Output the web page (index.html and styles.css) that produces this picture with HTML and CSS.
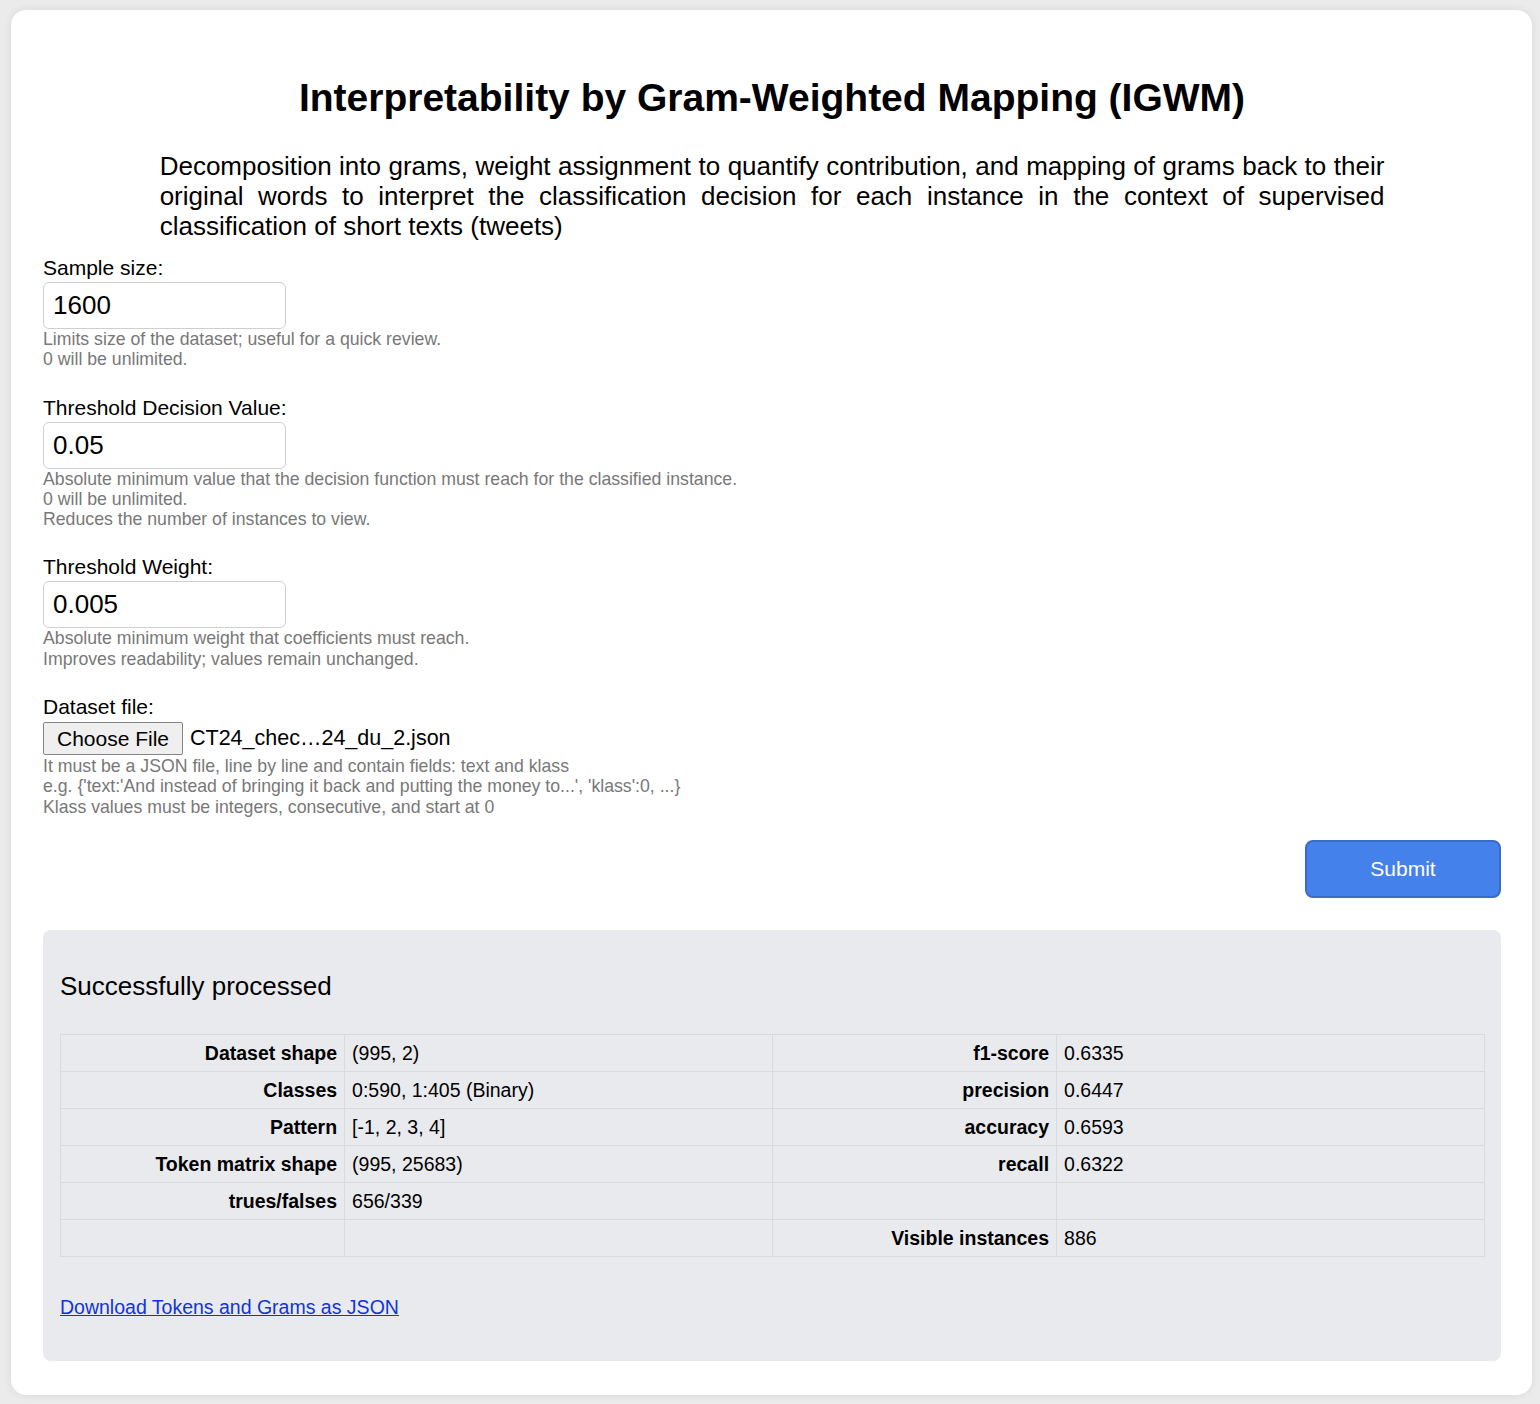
FILE: index.html
```html
<!DOCTYPE html>
<html lang="en">
<head>
<meta charset="utf-8">
<title>IGWM</title>
<link rel="stylesheet" href="styles.css">
</head>
<body>
<div class="card">
  <h1 class="title">Interpretability by Gram-Weighted Mapping (IGWM)</h1>
  <p class="intro">Decomposition into grams, weight assignment to quantify contribution, and mapping of grams back to their original words to interpret the classification decision for each instance in the context of supervised classification of short texts (tweets)</p>

  <form class="form">
    <div class="group">
      <label class="label">Sample size:</label>
      <input class="field" type="text" value="1600">
      <div class="help">Limits size of the dataset; useful for a quick review.<br>0 will be unlimited.</div>
    </div>
    <div class="group">
      <label class="label">Threshold Decision Value:</label>
      <input class="field" type="text" value="0.05">
      <div class="help">Absolute minimum value that the decision function must reach for the classified instance.<br>0 will be unlimited.<br>Reduces the number of instances to view.</div>
    </div>
    <div class="group">
      <label class="label">Threshold Weight:</label>
      <input class="field" type="text" value="0.005">
      <div class="help">Absolute minimum weight that coefficients must reach.<br>Improves readability; values remain unchanged.</div>
    </div>
    <div class="group">
      <label class="label">Dataset file:</label>
      <div class="file-row">
        <button type="button" class="file-btn">Choose File</button>
        <span class="file-name">CT24_chec…24_du_2.json</span>
      </div>
      <div class="help">It must be a JSON file, line by line and contain fields: text and klass<br>e.g. {'text:'And instead of bringing it back and putting the money to...', 'klass':0, ...}<br>Klass values must be integers, consecutive, and start at 0</div>
    </div>
    <div class="actions">
      <button type="button" class="submit">Submit</button>
    </div>
  </form>

  <section class="results">
    <h2 class="results-title">Successfully processed</h2>
    <table class="stats">
      <colgroup>
        <col class="c-key"><col class="c-val"><col class="c-key"><col class="c-val">
      </colgroup>
      <tr><th>Dataset shape</th><td>(995, 2)</td><th>f1-score</th><td>0.6335</td></tr>
      <tr><th>Classes</th><td>0:590, 1:405 (Binary)</td><th>precision</th><td>0.6447</td></tr>
      <tr><th>Pattern</th><td>[-1, 2, 3, 4]</td><th>accuracy</th><td>0.6593</td></tr>
      <tr><th>Token matrix shape</th><td>(995, 25683)</td><th>recall</th><td>0.6322</td></tr>
      <tr><th>trues/falses</th><td>656/339</td><th></th><td></td></tr>
      <tr><th></th><td></td><th>Visible instances</th><td>886</td></tr>
    </table>
    <a class="download" href="#">Download Tokens and Grams as JSON</a>
  </section>
</div>
</body>
</html>
```
FILE: styles.css
```css
html, body {
  margin: 0;
  padding: 0;
}
body {
  background: #ebebeb;
  font-family: "Liberation Sans", Arial, sans-serif;
  color: #000;
  padding: 10px 8px 9px 11px;
}
.card {
  background: #fff;
  border-radius: 15px;
  box-shadow: 0 0 8px rgba(0, 0, 0, 0.08);
  padding: 32px 31px 34px 32px;
}
.title {
  font-size: 39px;
  font-weight: bold;
  text-align: center;
  margin: 35px 0 33px;
  line-height: 41px;
}
.intro {
  width: 84%;
  margin: 0 auto 16px;
  font-size: 26px;
  line-height: 30px;
  text-align: justify;
}
.form {
  margin: 0;
}
.group {
  margin-bottom: 27px;
}
.label {
  display: block;
  font-size: 21px;
  line-height: 21px;
  margin-bottom: 4px;
}
.field {
  display: block;
  box-sizing: border-box;
  width: 243px;
  height: 47px;
  border: 1px solid #cfcfcf;
  border-radius: 6px;
  padding: 0 9px;
  font-family: "Liberation Sans", Arial, sans-serif;
  font-size: 26px;
  color: #000;
  margin: 0;
}
.help {
  font-size: 17.7px;
  line-height: 20.3px;
  color: #787878;
}
.file-row {
  display: flex;
  align-items: center;
  gap: 7px;
  height: 35px;
}
.file-btn {
  font-family: "Liberation Sans", Arial, sans-serif;
  font-size: 21px;
  height: 33px;
  width: 140px;
  padding: 0;
  background: #efefef;
  border: 1px solid #858585;
  border-radius: 2px;
  color: #000;
}
.file-name {
  font-size: 21.5px;
}
.actions {
  display: flex;
  justify-content: flex-end;
  margin-top: -4px;
}
.submit {
  width: 196px;
  height: 58px;
  background: #4481ea;
  border: 2px solid #3a6bc6;
  border-radius: 8px;
  color: #fff;
  font-family: "Liberation Sans", Arial, sans-serif;
  font-size: 21px;
}
.results {
  margin-top: 32px;
  background: #e9eaee;
  border-radius: 8px;
  padding: 17px 16px 43px 17px;
}
.results-title {
  font-size: 26px;
  font-weight: normal;
  line-height: 28px;
  margin: 25px 0 34px;
}
.stats {
  width: 100%;
  border-collapse: collapse;
  font-size: 19.5px;
  table-layout: fixed;
}
.c-key {
  width: 19.95%;
}
.c-val {
  width: 30.05%;
}
.stats th, .stats td {
  border: 1px solid #d9dadd;
  padding: 8px 7px;
  line-height: 20px;
  height: 20px;
}
.stats th {
  text-align: right;
  font-weight: bold;
}
.stats td {
  text-align: left;
}
.download {
  display: inline-block;
  margin-top: 40px;
  font-size: 19.5px;
  line-height: 21px;
  color: #1133dd;
  text-decoration: underline;
}
```
